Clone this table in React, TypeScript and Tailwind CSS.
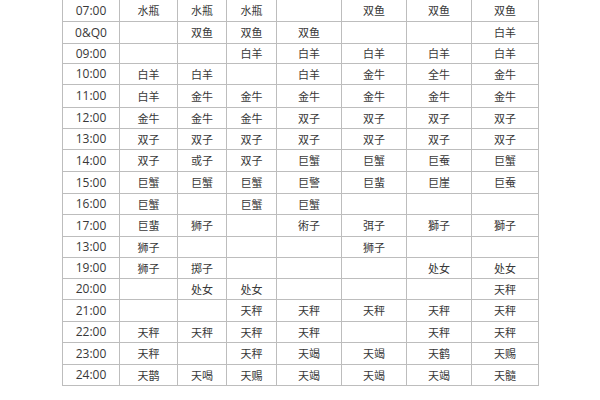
import React from 'react';

// Each row: time label followed by seven sign cells
const rows: string[][] = [
  ['07:00', '水瓶', '水瓶', '水瓶', '', '双鱼', '双鱼', '双鱼'],
  ['0&Q0', '', '双鱼', '双鱼', '双鱼', '', '', '白羊'],
  ['09:00', '', '', '白羊', '白羊', '白羊', '白羊', '白羊'],
  ['10:00', '白羊', '白羊', '', '白羊', '金牛', '全牛', '金牛'],
  ['11:00', '白羊', '金牛', '金牛', '金牛', '金牛', '金牛', '金牛'],
  ['12:00', '金牛', '金牛', '金牛', '双子', '双子', '双子', '双子'],
  ['13:00', '双子', '双子', '双子', '双子', '双子', '双子', '双子'],
  ['14:00', '双子', '或子', '双子', '巨蟹', '巨蟹', '巨蚕', '巨蟹'],
  ['15:00', '巨蟹', '巨蟹', '巨蟹', '巨警', '巨蜚', '巨崖', '巨蚕'],
  ['16:00', '巨蟹', '', '巨蟹', '巨蟹', '', '', ''],
  ['17:00', '巨蜚', '狮子', '', '術子', '弭子', '獅子', '獅子'],
  ['13:00', '狮子', '', '', '', '狮子', '', ''],
  ['19:00', '狮子', '掷子', '', '', '', '处女', '处女'],
  ['20:00', '', '处女', '处女', '', '', '', '天秤'],
  ['21:00', '', '', '天秤', '天秤', '天秤', '天秤', '天秤'],
  ['22:00', '天秤', '天秤', '天秤', '天秤', '', '天秤', '天秤'],
  ['23:00', '天秤', '', '天秤', '天竭', '天竭', '天鹤', '天赐'],
  ['24:00', '天鹊', '天喝', '天赐', '天竭', '天竭', '天竭', '天髓'],
];

const App: React.FC = () => {
  return (
    <div className="w-[600px] h-[400px] overflow-hidden bg-white">
      <div
        className="ml-[62px] w-[477px] grid grid-cols-[57px_58px_49px_50px_65px_65px_65px_67px] grid-rows-[22px_22px_20px_21px_23px_21px_21px_22px_22px_21px_22px_21px_21px_21px_22px_21px_22px_21px] border-l border-[#bdbdbd] text-[#383838]"
        style={{ fontFamily: '"Open Sans", "Noto Sans CJK SC", sans-serif' }}
      >
        {rows.map((row, ri) =>
          row.map((cell, ci) => (
            <div
              key={`${ri}-${ci}`}
              className={`flex items-center justify-center border-r border-b border-[#bdbdbd] leading-none ${
                ci === 0 ? 'text-[12px]' : 'text-[11px]'
              }`}
            >
              {cell}
            </div>
          ))
        )}
      </div>
    </div>
  );
};

export default App;
